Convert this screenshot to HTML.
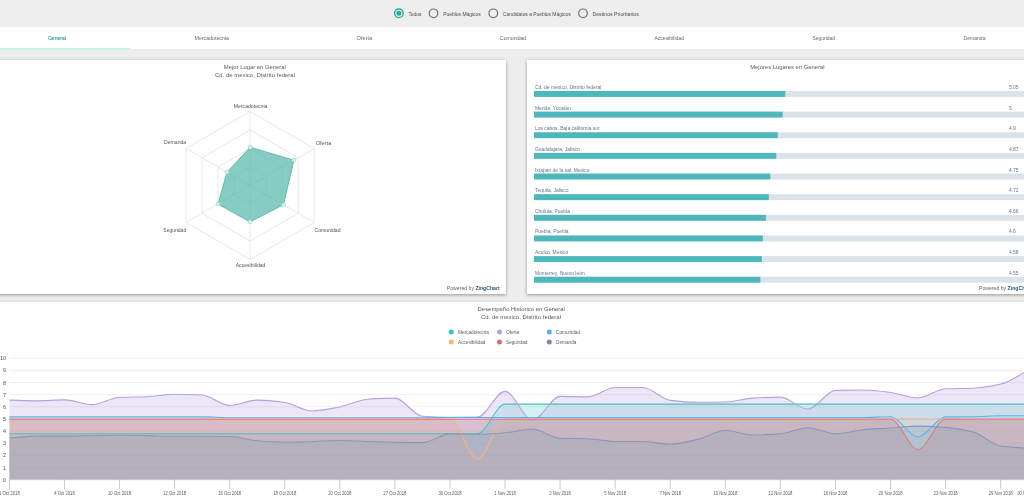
<!DOCTYPE html>
<html><head><meta charset="utf-8"><style>
html,body{margin:0;padding:0;}
body{width:1024px;height:499px;overflow:hidden;position:relative;background:#ededed;font-family:"Liberation Sans", sans-serif;}
.abs{position:absolute;}
#topbar{left:0;top:0;width:1024px;height:27px;background:#eeeeee;}
#tabs{left:0;top:27px;width:1024px;height:22px;background:#fff;box-shadow:0 -0.5px 1.5px rgba(0,0,0,0.06);}
#uline{left:0;top:48px;width:131px;height:2px;background:#c4f5e7;}
.card{background:#fff;box-shadow:0 0 3px rgba(0,0,0,0.18),0 1.5px 3px rgba(0,0,0,0.24);}
#c1{left:-20px;top:60px;width:526px;height:234px;}
#c2{left:527px;top:60px;width:530px;height:234px;}
#c3{left:-10px;top:302px;width:1050px;height:220px;box-shadow:0 -1px 2px rgba(0,0,0,0.05);}
svg{position:absolute;left:0;top:0;will-change:transform;}
text{font-family:"Liberation Sans", sans-serif;}
</style></head><body>
<div class="abs" id="topbar"></div>
<div class="abs" id="tabs"></div>
<div class="abs" id="uline"></div>
<div class="abs card" id="c1"></div>
<div class="abs card" id="c2"></div>
<div class="abs card" id="c3"></div>
<svg width="1024" height="499" viewBox="0 0 1024 499">
<circle cx="398.9" cy="13.3" r="4.3" fill="none" stroke="#2aa99b" stroke-width="1.4"/><circle cx="398.9" cy="13.3" r="2.5" fill="#2aa99b"/>
<text x="408.40" y="15.70" font-size="5.8" text-anchor="start" fill="#4a4a4a" textLength="13.00" lengthAdjust="spacingAndGlyphs">Todos</text>
<circle cx="433.5" cy="13.3" r="4.3" fill="none" stroke="#6f6f6f" stroke-width="1.2"/>
<text x="443.20" y="15.70" font-size="5.8" text-anchor="start" fill="#4a4a4a" textLength="37.60" lengthAdjust="spacingAndGlyphs">Pueblos Mágicos</text>
<circle cx="493.3" cy="13.3" r="4.3" fill="none" stroke="#6f6f6f" stroke-width="1.2"/>
<text x="503.00" y="15.70" font-size="5.8" text-anchor="start" fill="#4a4a4a" textLength="67.60" lengthAdjust="spacingAndGlyphs">Candidatos a Pueblos Mágicos</text>
<circle cx="583" cy="13.3" r="4.3" fill="none" stroke="#6f6f6f" stroke-width="1.2"/>
<text x="592.50" y="15.70" font-size="5.8" text-anchor="start" fill="#4a4a4a" textLength="46.30" lengthAdjust="spacingAndGlyphs">Destinos Prioritarios</text>
<text x="47.90" y="39.80" font-size="5.7" text-anchor="start" fill="#2f9f92" textLength="18.10" lengthAdjust="spacingAndGlyphs" stroke="#2f9f92" stroke-width="0.12">General</text>
<text x="194.60" y="39.80" font-size="5.7" text-anchor="start" fill="#666" textLength="34.40" lengthAdjust="spacingAndGlyphs">Mercadotecnia</text>
<text x="356.60" y="39.80" font-size="5.7" text-anchor="start" fill="#666" textLength="15.70" lengthAdjust="spacingAndGlyphs">Oferta</text>
<text x="500.00" y="39.80" font-size="5.7" text-anchor="start" fill="#666" textLength="26.20" lengthAdjust="spacingAndGlyphs">Comunidad</text>
<text x="654.40" y="39.80" font-size="5.7" text-anchor="start" fill="#666" textLength="29.60" lengthAdjust="spacingAndGlyphs">Accesibilidad</text>
<text x="812.50" y="39.80" font-size="5.7" text-anchor="start" fill="#666" textLength="22.50" lengthAdjust="spacingAndGlyphs">Seguridad</text>
<text x="963.60" y="39.80" font-size="5.7" text-anchor="start" fill="#666" textLength="21.90" lengthAdjust="spacingAndGlyphs">Demanda</text>
<text x="223.80" y="69.00" font-size="5.9" text-anchor="start" fill="#5a5a5a" textLength="62.10" lengthAdjust="spacingAndGlyphs">Mejor Lugar en General</text>
<text x="215.00" y="76.70" font-size="5.9" text-anchor="start" fill="#5a5a5a" textLength="80.00" lengthAdjust="spacingAndGlyphs">Cd. de mexico, Distrito federal</text>
<polygon points="250.10,167.00 266.12,176.25 266.12,194.75 250.10,204.00 234.08,194.75 234.08,176.25" fill="none" stroke="#e2e2e2" stroke-width="0.8"/>
<polygon points="250.10,148.50 282.14,167.00 282.14,204.00 250.10,222.50 218.06,204.00 218.06,167.00" fill="none" stroke="#e2e2e2" stroke-width="0.8"/>
<polygon points="250.10,130.00 298.16,157.75 298.16,213.25 250.10,241.00 202.04,213.25 202.04,157.75" fill="none" stroke="#e2e2e2" stroke-width="0.8"/>
<polygon points="250.10,111.50 314.19,148.50 314.19,222.50 250.10,259.50 186.01,222.50 186.01,148.50" fill="none" stroke="#e2e2e2" stroke-width="0.8"/>
<line x1="250.1" y1="185.5" x2="250.10" y2="111.50" stroke="#e2e2e2" stroke-width="0.8"/>
<line x1="250.1" y1="185.5" x2="314.19" y2="148.50" stroke="#e2e2e2" stroke-width="0.8"/>
<line x1="250.1" y1="185.5" x2="314.19" y2="222.50" stroke="#e2e2e2" stroke-width="0.8"/>
<line x1="250.1" y1="185.5" x2="250.10" y2="259.50" stroke="#e2e2e2" stroke-width="0.8"/>
<line x1="250.1" y1="185.5" x2="186.01" y2="222.50" stroke="#e2e2e2" stroke-width="0.8"/>
<line x1="250.1" y1="185.5" x2="186.01" y2="148.50" stroke="#e2e2e2" stroke-width="0.8"/>
<polygon points="250.10,147.24 293.93,160.19 283.42,204.74 250.10,221.76 218.06,204.00 227.03,172.18" fill="#52b6a8" fill-opacity="0.7" stroke="#5fbbae" stroke-width="1"/>
<circle cx="250.10" cy="147.24" r="2" fill="#d8f0ea" stroke="#8fd0c5" stroke-width="0.6"/>
<circle cx="293.93" cy="160.19" r="2" fill="#d8f0ea" stroke="#8fd0c5" stroke-width="0.6"/>
<circle cx="283.42" cy="204.74" r="2" fill="#d8f0ea" stroke="#8fd0c5" stroke-width="0.6"/>
<circle cx="250.10" cy="221.76" r="2" fill="#d8f0ea" stroke="#8fd0c5" stroke-width="0.6"/>
<circle cx="218.06" cy="204.00" r="2" fill="#d8f0ea" stroke="#8fd0c5" stroke-width="0.6"/>
<circle cx="227.03" cy="172.18" r="2" fill="#d8f0ea" stroke="#8fd0c5" stroke-width="0.6"/>
<text x="233.70" y="108.30" font-size="5.3" text-anchor="start" fill="#555" textLength="33.80" lengthAdjust="spacingAndGlyphs">Mercadotecnia</text>
<text x="315.70" y="145.20" font-size="5.3" text-anchor="start" fill="#555" textLength="15.60" lengthAdjust="spacingAndGlyphs">Oferta</text>
<text x="314.60" y="231.70" font-size="5.3" text-anchor="start" fill="#555" textLength="25.90" lengthAdjust="spacingAndGlyphs">Comunidad</text>
<text x="235.70" y="267.10" font-size="5.3" text-anchor="start" fill="#555" textLength="29.70" lengthAdjust="spacingAndGlyphs">Accesibilidad</text>
<text x="163.30" y="231.70" font-size="5.3" text-anchor="start" fill="#555" textLength="22.90" lengthAdjust="spacingAndGlyphs">Seguridad</text>
<text x="164.00" y="144.10" font-size="5.3" text-anchor="start" fill="#555" textLength="22.20" lengthAdjust="spacingAndGlyphs">Demanda</text>
<text x="446.8" y="289.7" font-size="5.4" fill="#666" textLength="52.9" lengthAdjust="spacingAndGlyphs">Powered by <tspan font-weight="bold" fill="#2a5868">ZingChart</tspan></text>
<text x="750.20" y="69.10" font-size="5.9" text-anchor="start" fill="#5a5a5a" textLength="74.50" lengthAdjust="spacingAndGlyphs">Mejores Lugares en General</text>
<rect x="534" y="91.00" width="500" height="5.9" fill="#dae3ea"/>
<rect x="534" y="91.00" width="251.24" height="5.9" fill="#4db8bc"/>
<text x="535.00" y="89.00" font-size="5.5" text-anchor="start" fill="#66738c" textLength="66.30" lengthAdjust="spacingAndGlyphs">Cd. de mexico, Distrito federal</text>
<text x="1009.00" y="89.00" font-size="5.5" text-anchor="start" fill="#66738c" textLength="9.63" lengthAdjust="spacingAndGlyphs">5.05</text>
<rect x="534" y="111.64" width="500" height="5.9" fill="#dae3ea"/>
<rect x="534" y="111.64" width="248.75" height="5.9" fill="#4db8bc"/>
<text x="535.00" y="109.64" font-size="5.5" text-anchor="start" fill="#66738c" textLength="35.68" lengthAdjust="spacingAndGlyphs">Merida, Yucatán</text>
<text x="1009.00" y="109.64" font-size="5.5" text-anchor="start" fill="#66738c" textLength="2.75" lengthAdjust="spacingAndGlyphs">5</text>
<rect x="534" y="132.28" width="500" height="5.9" fill="#dae3ea"/>
<rect x="534" y="132.28" width="243.78" height="5.9" fill="#4db8bc"/>
<text x="535.00" y="130.28" font-size="5.5" text-anchor="start" fill="#66738c" textLength="64.66" lengthAdjust="spacingAndGlyphs">Los cabos, Baja california sur</text>
<text x="1009.00" y="130.28" font-size="5.5" text-anchor="start" fill="#66738c" textLength="6.88" lengthAdjust="spacingAndGlyphs">4.9</text>
<rect x="534" y="152.92" width="500" height="5.9" fill="#dae3ea"/>
<rect x="534" y="152.92" width="242.28" height="5.9" fill="#4db8bc"/>
<text x="535.00" y="150.92" font-size="5.5" text-anchor="start" fill="#66738c" textLength="44.85" lengthAdjust="spacingAndGlyphs">Guadalajara, Jalisco</text>
<text x="1009.00" y="150.92" font-size="5.5" text-anchor="start" fill="#66738c" textLength="9.63" lengthAdjust="spacingAndGlyphs">4.87</text>
<rect x="534" y="173.56" width="500" height="5.9" fill="#dae3ea"/>
<rect x="534" y="173.56" width="236.31" height="5.9" fill="#4db8bc"/>
<text x="535.00" y="171.56" font-size="5.5" text-anchor="start" fill="#66738c" textLength="54.48" lengthAdjust="spacingAndGlyphs">Ixtapan de la sal, Mexico</text>
<text x="1009.00" y="171.56" font-size="5.5" text-anchor="start" fill="#66738c" textLength="9.63" lengthAdjust="spacingAndGlyphs">4.75</text>
<rect x="534" y="194.20" width="500" height="5.9" fill="#dae3ea"/>
<rect x="534" y="194.20" width="234.82" height="5.9" fill="#4db8bc"/>
<text x="535.00" y="192.20" font-size="5.5" text-anchor="start" fill="#66738c" textLength="33.57" lengthAdjust="spacingAndGlyphs">Tequila, Jalisco</text>
<text x="1009.00" y="192.20" font-size="5.5" text-anchor="start" fill="#66738c" textLength="9.63" lengthAdjust="spacingAndGlyphs">4.72</text>
<rect x="534" y="214.84" width="500" height="5.9" fill="#dae3ea"/>
<rect x="534" y="214.84" width="231.84" height="5.9" fill="#4db8bc"/>
<text x="535.00" y="212.84" font-size="5.5" text-anchor="start" fill="#66738c" textLength="34.95" lengthAdjust="spacingAndGlyphs">Cholula, Puebla</text>
<text x="1009.00" y="212.84" font-size="5.5" text-anchor="start" fill="#66738c" textLength="9.63" lengthAdjust="spacingAndGlyphs">4.66</text>
<rect x="534" y="235.48" width="500" height="5.9" fill="#dae3ea"/>
<rect x="534" y="235.48" width="228.85" height="5.9" fill="#4db8bc"/>
<text x="535.00" y="233.48" font-size="5.5" text-anchor="start" fill="#66738c" textLength="33.57" lengthAdjust="spacingAndGlyphs">Puebla, Puebla</text>
<text x="1009.00" y="233.48" font-size="5.5" text-anchor="start" fill="#66738c" textLength="6.88" lengthAdjust="spacingAndGlyphs">4.6</text>
<rect x="534" y="256.12" width="500" height="5.9" fill="#dae3ea"/>
<rect x="534" y="256.12" width="227.85" height="5.9" fill="#4db8bc"/>
<text x="535.00" y="254.12" font-size="5.5" text-anchor="start" fill="#66738c" textLength="33.29" lengthAdjust="spacingAndGlyphs">Aculco, Mexico</text>
<text x="1009.00" y="254.12" font-size="5.5" text-anchor="start" fill="#66738c" textLength="9.63" lengthAdjust="spacingAndGlyphs">4.58</text>
<rect x="534" y="276.76" width="500" height="5.9" fill="#dae3ea"/>
<rect x="534" y="276.76" width="226.36" height="5.9" fill="#4db8bc"/>
<text x="535.00" y="274.76" font-size="5.5" text-anchor="start" fill="#66738c" textLength="49.70" lengthAdjust="spacingAndGlyphs">Monterrey, Nuevo león</text>
<text x="1009.00" y="274.76" font-size="5.5" text-anchor="start" fill="#66738c" textLength="9.63" lengthAdjust="spacingAndGlyphs">4.55</text>
<text x="979" y="289.7" font-size="5.4" fill="#666" textLength="52.9" lengthAdjust="spacingAndGlyphs">Powered by <tspan font-weight="bold" fill="#2a5868">ZingChart</tspan></text>
<text x="477.60" y="311.00" font-size="5.9" text-anchor="start" fill="#5a5a5a" textLength="87.30" lengthAdjust="spacingAndGlyphs">Desempeño Historico en General</text>
<text x="521.00" y="318.60" font-size="5.9" text-anchor="middle" fill="#5a5a5a" textLength="80.00" lengthAdjust="spacingAndGlyphs">Cd. de mexico, Distrito federal</text>
<circle cx="451.3" cy="332.1" r="2.5" fill="#35c4c2"/>
<text x="458.00" y="333.90" font-size="5.0" text-anchor="start" fill="#606060" textLength="30.83" lengthAdjust="spacingAndGlyphs">Mercadotecnia</text>
<circle cx="499.5" cy="332.1" r="2.5" fill="#b7a2e0"/>
<text x="506.00" y="333.90" font-size="5.0" text-anchor="start" fill="#606060" textLength="13.06" lengthAdjust="spacingAndGlyphs">Oferta</text>
<circle cx="549.3" cy="332.1" r="2.5" fill="#56acee"/>
<text x="556.00" y="333.90" font-size="5.0" text-anchor="start" fill="#606060" textLength="24.04" lengthAdjust="spacingAndGlyphs">Comunidad</text>
<circle cx="451.3" cy="342.0" r="2.5" fill="#fdb27e"/>
<text x="458.00" y="343.80" font-size="5.0" text-anchor="start" fill="#606060" textLength="27.43" lengthAdjust="spacingAndGlyphs">Accesibilidad</text>
<circle cx="499.5" cy="342.0" r="2.5" fill="#d86c76"/>
<text x="506.00" y="343.80" font-size="5.0" text-anchor="start" fill="#606060" textLength="21.43" lengthAdjust="spacingAndGlyphs">Seguridad</text>
<circle cx="549.3" cy="342.0" r="2.5" fill="#7e89ae"/>
<text x="556.00" y="343.80" font-size="5.0" text-anchor="start" fill="#606060" textLength="20.38" lengthAdjust="spacingAndGlyphs">Demanda</text>
<line x1="9.4" y1="467.55" x2="1024" y2="467.55" stroke="#ededed" stroke-width="0.9"/>
<line x1="9.4" y1="455.40" x2="1024" y2="455.40" stroke="#ededed" stroke-width="0.9"/>
<line x1="9.4" y1="443.25" x2="1024" y2="443.25" stroke="#ededed" stroke-width="0.9"/>
<line x1="9.4" y1="431.10" x2="1024" y2="431.10" stroke="#ededed" stroke-width="0.9"/>
<line x1="9.4" y1="418.95" x2="1024" y2="418.95" stroke="#ededed" stroke-width="0.9"/>
<line x1="9.4" y1="406.80" x2="1024" y2="406.80" stroke="#ededed" stroke-width="0.9"/>
<line x1="9.4" y1="394.65" x2="1024" y2="394.65" stroke="#ededed" stroke-width="0.9"/>
<line x1="9.4" y1="382.50" x2="1024" y2="382.50" stroke="#ededed" stroke-width="0.9"/>
<line x1="9.4" y1="370.35" x2="1024" y2="370.35" stroke="#ededed" stroke-width="0.9"/>
<line x1="9.4" y1="358.20" x2="1024" y2="358.20" stroke="#ededed" stroke-width="0.9"/>
<path d="M9.40,433.77 C18.58,433.77 27.76,433.77 36.94,433.77 C46.11,433.77 55.29,433.77 64.47,433.77 C73.65,433.77 82.83,433.77 92.01,433.77 C101.18,433.77 110.36,433.77 119.54,433.77 C128.72,433.77 137.90,433.77 147.08,433.77 C156.25,433.77 165.43,433.77 174.61,433.77 C183.79,433.77 192.97,433.77 202.15,433.77 C211.32,433.77 220.50,433.77 229.68,433.77 C238.86,433.77 248.04,433.77 257.21,433.77 C266.39,433.77 275.57,433.77 284.75,433.77 C293.93,433.77 303.11,433.77 312.28,433.77 C321.46,433.77 330.64,433.77 339.82,433.77 C349.00,433.77 358.18,433.77 367.35,433.77 C376.53,433.77 385.71,433.77 394.89,433.77 C404.07,433.77 413.25,433.77 422.42,433.77 C431.60,433.77 440.78,433.77 449.96,433.77 C459.14,433.77 468.32,433.77 477.50,433.77 C486.67,433.77 495.85,404.13 505.03,404.13 C514.21,404.13 523.39,404.13 532.56,404.13 C541.74,404.13 550.92,404.13 560.10,404.13 C569.28,404.13 578.46,404.13 587.63,404.13 C596.81,404.13 605.99,404.13 615.17,404.13 C624.35,404.13 633.53,404.13 642.70,404.13 C651.88,404.13 661.06,404.13 670.24,404.13 C679.42,404.13 688.60,404.13 697.77,404.13 C706.95,404.13 716.13,404.13 725.31,404.13 C734.49,404.13 743.67,404.13 752.85,404.13 C762.02,404.13 771.20,404.13 780.38,404.13 C789.56,404.13 798.74,404.13 807.91,404.13 C817.09,404.13 826.27,404.13 835.45,404.13 C844.63,404.13 853.81,404.13 862.99,404.13 C872.16,404.13 881.34,404.13 890.52,404.13 C899.70,404.13 908.88,404.13 918.05,404.13 C927.23,404.13 936.41,404.13 945.59,404.13 C954.77,404.13 963.95,404.13 973.12,404.13 C982.30,404.13 991.48,404.13 1000.66,404.13 C1009.84,404.13 1019.02,404.13 1028.19,404.13 L1028.19,479.70 L9.40,479.70 Z" fill="#2fc4be" fill-opacity="0.21" stroke="none"/>
<path d="M9.40,400.12 C18.58,400.36 27.76,400.85 36.94,400.85 C46.11,400.85 55.29,399.87 64.47,399.87 C73.65,399.87 82.83,404.61 92.01,404.61 C101.18,404.61 110.36,397.70 119.54,397.32 C128.72,396.95 137.90,397.04 147.08,396.72 C156.25,396.39 165.43,394.29 174.61,394.29 C183.79,394.29 192.97,394.56 202.15,395.01 C211.32,395.47 220.50,405.46 229.68,405.46 C238.86,405.46 248.04,400.12 257.21,400.12 C266.39,400.12 275.57,401.29 284.75,402.55 C293.93,403.80 303.11,410.93 312.28,410.93 C321.46,410.93 330.64,408.68 339.82,406.92 C349.00,405.17 358.18,399.90 367.35,399.27 C376.53,398.63 385.71,398.17 394.89,398.17 C404.07,398.17 413.25,415.59 422.42,416.28 C431.60,416.96 440.78,417.37 449.96,417.37 C459.14,417.37 468.32,417.29 477.50,417.13 C486.67,416.97 495.85,391.37 505.03,391.37 C514.21,391.37 523.39,420.16 532.56,420.16 C541.74,420.16 550.92,396.35 560.10,396.35 C569.28,396.35 578.46,396.84 587.63,396.84 C596.81,396.84 605.99,387.48 615.17,387.48 C624.35,387.48 633.53,387.48 642.70,387.48 C651.88,387.48 661.06,399.23 670.24,400.36 C679.42,401.49 688.60,402.30 697.77,402.30 C706.95,402.30 716.13,402.16 725.31,401.94 C734.49,401.72 743.67,398.74 752.85,398.17 C762.02,397.61 771.20,397.08 780.38,397.08 C789.56,397.08 798.74,409.11 807.91,409.11 C817.09,409.11 826.27,390.64 835.45,390.40 C844.63,390.16 853.81,390.03 862.99,390.03 C872.16,390.03 881.34,391.34 890.52,392.46 C899.70,393.58 908.88,397.93 918.05,397.93 C927.23,397.93 936.41,389.20 945.59,388.82 C954.77,388.44 963.95,388.56 973.12,388.21 C982.30,387.86 991.48,386.20 1000.66,384.08 C1009.84,381.96 1019.02,374.93 1028.19,370.35 L1028.19,479.70 L9.40,479.70 Z" fill="#b59ee0" fill-opacity="0.25" stroke="none"/>
<path d="M9.40,416.88 C18.58,416.88 27.76,416.88 36.94,416.88 C46.11,416.88 55.29,416.88 64.47,416.88 C73.65,416.88 82.83,416.88 92.01,416.88 C101.18,416.88 110.36,416.88 119.54,416.88 C128.72,416.88 137.90,416.88 147.08,416.88 C156.25,416.88 165.43,416.88 174.61,416.88 C183.79,416.88 192.97,416.88 202.15,416.88 C211.32,416.88 220.50,417.74 229.68,417.74 C238.86,417.74 248.04,417.74 257.21,417.74 C266.39,417.74 275.57,417.74 284.75,417.74 C293.93,417.74 303.11,417.74 312.28,417.74 C321.46,417.74 330.64,417.74 339.82,417.74 C349.00,417.74 358.18,417.74 367.35,417.74 C376.53,417.74 385.71,417.74 394.89,417.74 C404.07,417.74 413.25,417.74 422.42,417.74 C431.60,417.74 440.78,417.49 449.96,417.49 C459.14,417.49 468.32,417.49 477.50,417.49 C486.67,417.49 495.85,417.49 505.03,417.49 C514.21,417.49 523.39,417.49 532.56,417.49 C541.74,417.49 550.92,417.49 560.10,417.49 C569.28,417.49 578.46,417.49 587.63,417.49 C596.81,417.49 605.99,417.49 615.17,417.49 C624.35,417.49 633.53,417.49 642.70,417.49 C651.88,417.49 661.06,417.49 670.24,417.49 C679.42,417.49 688.60,417.49 697.77,417.49 C706.95,417.49 716.13,417.49 725.31,417.49 C734.49,417.49 743.67,417.49 752.85,417.49 C762.02,417.49 771.20,417.49 780.38,417.49 C789.56,417.49 798.74,417.49 807.91,417.49 C817.09,417.49 826.27,417.49 835.45,417.49 C844.63,417.49 853.81,417.49 862.99,417.49 C872.16,417.49 881.34,416.76 890.52,416.76 C899.70,416.76 908.88,436.93 918.05,436.93 C927.23,436.93 936.41,416.97 945.59,416.88 C954.77,416.80 963.95,416.83 973.12,416.76 C982.30,416.69 991.48,415.79 1000.66,415.79 C1009.84,415.79 1019.02,415.79 1028.19,415.79 L1028.19,479.70 L9.40,479.70 Z" fill="#5aaee8" fill-opacity="0.14" stroke="none"/>
<path d="M9.40,418.95 C18.58,418.95 27.76,418.95 36.94,418.95 C46.11,418.95 55.29,418.95 64.47,418.95 C73.65,418.95 82.83,418.95 92.01,418.95 C101.18,418.95 110.36,418.95 119.54,418.95 C128.72,418.95 137.90,418.95 147.08,418.95 C156.25,418.95 165.43,418.95 174.61,418.95 C183.79,418.95 192.97,418.95 202.15,418.95 C211.32,418.95 220.50,418.95 229.68,418.95 C238.86,418.95 248.04,418.95 257.21,418.95 C266.39,418.95 275.57,418.95 284.75,418.95 C293.93,418.95 303.11,418.95 312.28,418.95 C321.46,418.95 330.64,418.95 339.82,418.95 C349.00,418.95 358.18,418.95 367.35,418.95 C376.53,418.95 385.71,418.95 394.89,418.95 C404.07,418.95 413.25,418.95 422.42,418.95 C431.60,418.95 440.78,418.95 449.96,418.95 C459.14,418.95 468.32,459.17 477.50,459.17 C486.67,459.17 495.85,418.95 505.03,418.95 C514.21,418.95 523.39,418.95 532.56,418.95 C541.74,418.95 550.92,418.95 560.10,418.95 C569.28,418.95 578.46,418.95 587.63,418.95 C596.81,418.95 605.99,418.95 615.17,418.95 C624.35,418.95 633.53,418.95 642.70,418.95 C651.88,418.95 661.06,418.95 670.24,418.95 C679.42,418.95 688.60,418.95 697.77,418.95 C706.95,418.95 716.13,418.95 725.31,418.95 C734.49,418.95 743.67,418.95 752.85,418.95 C762.02,418.95 771.20,418.95 780.38,418.95 C789.56,418.95 798.74,418.95 807.91,418.95 C817.09,418.95 826.27,418.95 835.45,418.95 C844.63,418.95 853.81,418.95 862.99,418.95 C872.16,418.95 881.34,418.95 890.52,418.95 C899.70,418.95 908.88,418.95 918.05,418.95 C927.23,418.95 936.41,418.95 945.59,418.95 C954.77,418.95 963.95,418.95 973.12,418.95 C982.30,418.95 991.48,418.95 1000.66,418.95 C1009.84,418.95 1019.02,418.95 1028.19,418.95 L1028.19,479.70 L9.40,479.70 Z" fill="#f7ab72" fill-opacity="0.13" stroke="none"/>
<path d="M9.40,419.19 C18.58,419.19 27.76,419.19 36.94,419.19 C46.11,419.19 55.29,419.19 64.47,419.19 C73.65,419.19 82.83,419.19 92.01,419.19 C101.18,419.19 110.36,419.19 119.54,419.19 C128.72,419.19 137.90,419.19 147.08,419.19 C156.25,419.19 165.43,419.19 174.61,419.19 C183.79,419.19 192.97,419.19 202.15,419.19 C211.32,419.19 220.50,419.19 229.68,419.19 C238.86,419.19 248.04,419.19 257.21,419.19 C266.39,419.19 275.57,419.19 284.75,419.19 C293.93,419.19 303.11,419.19 312.28,419.19 C321.46,419.19 330.64,419.19 339.82,419.19 C349.00,419.19 358.18,419.19 367.35,419.19 C376.53,419.19 385.71,419.19 394.89,419.19 C404.07,419.19 413.25,419.19 422.42,419.19 C431.60,419.19 440.78,419.19 449.96,419.19 C459.14,419.19 468.32,419.19 477.50,419.19 C486.67,419.19 495.85,419.19 505.03,419.19 C514.21,419.19 523.39,419.19 532.56,419.19 C541.74,419.19 550.92,419.19 560.10,419.19 C569.28,419.19 578.46,419.19 587.63,419.19 C596.81,419.19 605.99,419.19 615.17,419.19 C624.35,419.19 633.53,419.19 642.70,419.19 C651.88,419.19 661.06,419.19 670.24,419.19 C679.42,419.19 688.60,419.19 697.77,419.19 C706.95,419.19 716.13,419.19 725.31,419.19 C734.49,419.19 743.67,419.19 752.85,419.19 C762.02,419.19 771.20,419.19 780.38,419.19 C789.56,419.19 798.74,419.19 807.91,419.19 C817.09,419.19 826.27,419.19 835.45,419.19 C844.63,419.19 853.81,419.19 862.99,419.19 C872.16,419.19 881.34,419.19 890.52,419.19 C899.70,419.19 908.88,449.45 918.05,449.45 C927.23,449.45 936.41,419.19 945.59,419.19 C954.77,419.19 963.95,419.19 973.12,419.19 C982.30,419.19 991.48,419.19 1000.66,419.19 C1009.84,419.19 1019.02,419.19 1028.19,419.19 L1028.19,479.70 L9.40,479.70 Z" fill="#d9636b" fill-opacity="0.25" stroke="none"/>
<path d="M9.40,438.03 C18.58,437.38 27.76,436.08 36.94,436.08 C46.11,436.08 55.29,436.08 64.47,436.08 C73.65,436.08 82.83,435.86 92.01,435.72 C101.18,435.58 110.36,435.23 119.54,435.23 C128.72,435.23 137.90,435.43 147.08,435.60 C156.25,435.76 165.43,436.32 174.61,436.32 C183.79,436.32 192.97,436.32 202.15,436.32 C211.32,436.32 220.50,436.37 229.68,436.45 C238.86,436.52 248.04,440.09 257.21,440.82 C266.39,441.55 275.57,442.28 284.75,442.28 C293.93,442.28 303.11,441.84 312.28,441.55 C321.46,441.26 330.64,440.46 339.82,440.46 C349.00,440.46 358.18,441.26 367.35,441.55 C376.53,441.84 385.71,442.12 394.89,442.28 C404.07,442.44 413.25,442.64 422.42,442.64 C431.60,442.64 440.78,433.89 449.96,433.89 C459.14,433.89 468.32,434.26 477.50,434.26 C486.67,434.26 495.85,433.50 505.03,432.80 C514.21,432.10 523.39,429.03 532.56,429.03 C541.74,429.03 550.92,437.96 560.10,438.27 C569.28,438.58 578.46,438.48 587.63,438.75 C596.81,439.03 605.99,441.55 615.17,441.55 C624.35,441.55 633.53,441.55 642.70,441.55 C651.88,441.55 661.06,444.22 670.24,444.22 C679.42,444.22 688.60,441.46 697.77,439.36 C706.95,437.27 716.13,430.49 725.31,430.49 C734.49,430.49 743.67,434.99 752.85,434.99 C762.02,434.99 771.20,434.51 780.38,433.89 C789.56,433.27 798.74,427.70 807.91,427.70 C817.09,427.70 826.27,433.89 835.45,433.89 C844.63,433.89 853.81,430.57 862.99,429.76 C872.16,428.96 881.34,428.67 890.52,428.06 C899.70,427.46 908.88,426.12 918.05,426.12 C927.23,426.12 936.41,426.69 945.59,427.33 C954.77,427.98 963.95,429.71 973.12,432.07 C982.30,434.43 991.48,444.78 1000.66,446.04 C1009.84,447.31 1019.02,447.50 1028.19,448.23 L1028.19,479.70 L9.40,479.70 Z" fill="#8ca5b6" fill-opacity="0.33" stroke="none"/>
<path d="M9.40,433.77 C18.58,433.77 27.76,433.77 36.94,433.77 C46.11,433.77 55.29,433.77 64.47,433.77 C73.65,433.77 82.83,433.77 92.01,433.77 C101.18,433.77 110.36,433.77 119.54,433.77 C128.72,433.77 137.90,433.77 147.08,433.77 C156.25,433.77 165.43,433.77 174.61,433.77 C183.79,433.77 192.97,433.77 202.15,433.77 C211.32,433.77 220.50,433.77 229.68,433.77 C238.86,433.77 248.04,433.77 257.21,433.77 C266.39,433.77 275.57,433.77 284.75,433.77 C293.93,433.77 303.11,433.77 312.28,433.77 C321.46,433.77 330.64,433.77 339.82,433.77 C349.00,433.77 358.18,433.77 367.35,433.77 C376.53,433.77 385.71,433.77 394.89,433.77 C404.07,433.77 413.25,433.77 422.42,433.77 C431.60,433.77 440.78,433.77 449.96,433.77 C459.14,433.77 468.32,433.77 477.50,433.77 C486.67,433.77 495.85,404.13 505.03,404.13 C514.21,404.13 523.39,404.13 532.56,404.13 C541.74,404.13 550.92,404.13 560.10,404.13 C569.28,404.13 578.46,404.13 587.63,404.13 C596.81,404.13 605.99,404.13 615.17,404.13 C624.35,404.13 633.53,404.13 642.70,404.13 C651.88,404.13 661.06,404.13 670.24,404.13 C679.42,404.13 688.60,404.13 697.77,404.13 C706.95,404.13 716.13,404.13 725.31,404.13 C734.49,404.13 743.67,404.13 752.85,404.13 C762.02,404.13 771.20,404.13 780.38,404.13 C789.56,404.13 798.74,404.13 807.91,404.13 C817.09,404.13 826.27,404.13 835.45,404.13 C844.63,404.13 853.81,404.13 862.99,404.13 C872.16,404.13 881.34,404.13 890.52,404.13 C899.70,404.13 908.88,404.13 918.05,404.13 C927.23,404.13 936.41,404.13 945.59,404.13 C954.77,404.13 963.95,404.13 973.12,404.13 C982.30,404.13 991.48,404.13 1000.66,404.13 C1009.84,404.13 1019.02,404.13 1028.19,404.13" fill="none" stroke="#45c2bc" stroke-width="1.1"/>
<path d="M9.40,400.12 C18.58,400.36 27.76,400.85 36.94,400.85 C46.11,400.85 55.29,399.87 64.47,399.87 C73.65,399.87 82.83,404.61 92.01,404.61 C101.18,404.61 110.36,397.70 119.54,397.32 C128.72,396.95 137.90,397.04 147.08,396.72 C156.25,396.39 165.43,394.29 174.61,394.29 C183.79,394.29 192.97,394.56 202.15,395.01 C211.32,395.47 220.50,405.46 229.68,405.46 C238.86,405.46 248.04,400.12 257.21,400.12 C266.39,400.12 275.57,401.29 284.75,402.55 C293.93,403.80 303.11,410.93 312.28,410.93 C321.46,410.93 330.64,408.68 339.82,406.92 C349.00,405.17 358.18,399.90 367.35,399.27 C376.53,398.63 385.71,398.17 394.89,398.17 C404.07,398.17 413.25,415.59 422.42,416.28 C431.60,416.96 440.78,417.37 449.96,417.37 C459.14,417.37 468.32,417.29 477.50,417.13 C486.67,416.97 495.85,391.37 505.03,391.37 C514.21,391.37 523.39,420.16 532.56,420.16 C541.74,420.16 550.92,396.35 560.10,396.35 C569.28,396.35 578.46,396.84 587.63,396.84 C596.81,396.84 605.99,387.48 615.17,387.48 C624.35,387.48 633.53,387.48 642.70,387.48 C651.88,387.48 661.06,399.23 670.24,400.36 C679.42,401.49 688.60,402.30 697.77,402.30 C706.95,402.30 716.13,402.16 725.31,401.94 C734.49,401.72 743.67,398.74 752.85,398.17 C762.02,397.61 771.20,397.08 780.38,397.08 C789.56,397.08 798.74,409.11 807.91,409.11 C817.09,409.11 826.27,390.64 835.45,390.40 C844.63,390.16 853.81,390.03 862.99,390.03 C872.16,390.03 881.34,391.34 890.52,392.46 C899.70,393.58 908.88,397.93 918.05,397.93 C927.23,397.93 936.41,389.20 945.59,388.82 C954.77,388.44 963.95,388.56 973.12,388.21 C982.30,387.86 991.48,386.20 1000.66,384.08 C1009.84,381.96 1019.02,374.93 1028.19,370.35" fill="none" stroke="#b7a0e2" stroke-width="1.1"/>
<path d="M9.40,416.88 C18.58,416.88 27.76,416.88 36.94,416.88 C46.11,416.88 55.29,416.88 64.47,416.88 C73.65,416.88 82.83,416.88 92.01,416.88 C101.18,416.88 110.36,416.88 119.54,416.88 C128.72,416.88 137.90,416.88 147.08,416.88 C156.25,416.88 165.43,416.88 174.61,416.88 C183.79,416.88 192.97,416.88 202.15,416.88 C211.32,416.88 220.50,417.74 229.68,417.74 C238.86,417.74 248.04,417.74 257.21,417.74 C266.39,417.74 275.57,417.74 284.75,417.74 C293.93,417.74 303.11,417.74 312.28,417.74 C321.46,417.74 330.64,417.74 339.82,417.74 C349.00,417.74 358.18,417.74 367.35,417.74 C376.53,417.74 385.71,417.74 394.89,417.74 C404.07,417.74 413.25,417.74 422.42,417.74 C431.60,417.74 440.78,417.49 449.96,417.49 C459.14,417.49 468.32,417.49 477.50,417.49 C486.67,417.49 495.85,417.49 505.03,417.49 C514.21,417.49 523.39,417.49 532.56,417.49 C541.74,417.49 550.92,417.49 560.10,417.49 C569.28,417.49 578.46,417.49 587.63,417.49 C596.81,417.49 605.99,417.49 615.17,417.49 C624.35,417.49 633.53,417.49 642.70,417.49 C651.88,417.49 661.06,417.49 670.24,417.49 C679.42,417.49 688.60,417.49 697.77,417.49 C706.95,417.49 716.13,417.49 725.31,417.49 C734.49,417.49 743.67,417.49 752.85,417.49 C762.02,417.49 771.20,417.49 780.38,417.49 C789.56,417.49 798.74,417.49 807.91,417.49 C817.09,417.49 826.27,417.49 835.45,417.49 C844.63,417.49 853.81,417.49 862.99,417.49 C872.16,417.49 881.34,416.76 890.52,416.76 C899.70,416.76 908.88,436.93 918.05,436.93 C927.23,436.93 936.41,416.97 945.59,416.88 C954.77,416.80 963.95,416.83 973.12,416.76 C982.30,416.69 991.48,415.79 1000.66,415.79 C1009.84,415.79 1019.02,415.79 1028.19,415.79" fill="none" stroke="#62b1ea" stroke-width="1.1"/>
<path d="M9.40,418.95 C18.58,418.95 27.76,418.95 36.94,418.95 C46.11,418.95 55.29,418.95 64.47,418.95 C73.65,418.95 82.83,418.95 92.01,418.95 C101.18,418.95 110.36,418.95 119.54,418.95 C128.72,418.95 137.90,418.95 147.08,418.95 C156.25,418.95 165.43,418.95 174.61,418.95 C183.79,418.95 192.97,418.95 202.15,418.95 C211.32,418.95 220.50,418.95 229.68,418.95 C238.86,418.95 248.04,418.95 257.21,418.95 C266.39,418.95 275.57,418.95 284.75,418.95 C293.93,418.95 303.11,418.95 312.28,418.95 C321.46,418.95 330.64,418.95 339.82,418.95 C349.00,418.95 358.18,418.95 367.35,418.95 C376.53,418.95 385.71,418.95 394.89,418.95 C404.07,418.95 413.25,418.95 422.42,418.95 C431.60,418.95 440.78,418.95 449.96,418.95 C459.14,418.95 468.32,459.17 477.50,459.17 C486.67,459.17 495.85,418.95 505.03,418.95 C514.21,418.95 523.39,418.95 532.56,418.95 C541.74,418.95 550.92,418.95 560.10,418.95 C569.28,418.95 578.46,418.95 587.63,418.95 C596.81,418.95 605.99,418.95 615.17,418.95 C624.35,418.95 633.53,418.95 642.70,418.95 C651.88,418.95 661.06,418.95 670.24,418.95 C679.42,418.95 688.60,418.95 697.77,418.95 C706.95,418.95 716.13,418.95 725.31,418.95 C734.49,418.95 743.67,418.95 752.85,418.95 C762.02,418.95 771.20,418.95 780.38,418.95 C789.56,418.95 798.74,418.95 807.91,418.95 C817.09,418.95 826.27,418.95 835.45,418.95 C844.63,418.95 853.81,418.95 862.99,418.95 C872.16,418.95 881.34,418.95 890.52,418.95 C899.70,418.95 908.88,418.95 918.05,418.95 C927.23,418.95 936.41,418.95 945.59,418.95 C954.77,418.95 963.95,418.95 973.12,418.95 C982.30,418.95 991.48,418.95 1000.66,418.95 C1009.84,418.95 1019.02,418.95 1028.19,418.95" fill="none" stroke="#f6b184" stroke-width="1.1"/>
<path d="M9.40,419.19 C18.58,419.19 27.76,419.19 36.94,419.19 C46.11,419.19 55.29,419.19 64.47,419.19 C73.65,419.19 82.83,419.19 92.01,419.19 C101.18,419.19 110.36,419.19 119.54,419.19 C128.72,419.19 137.90,419.19 147.08,419.19 C156.25,419.19 165.43,419.19 174.61,419.19 C183.79,419.19 192.97,419.19 202.15,419.19 C211.32,419.19 220.50,419.19 229.68,419.19 C238.86,419.19 248.04,419.19 257.21,419.19 C266.39,419.19 275.57,419.19 284.75,419.19 C293.93,419.19 303.11,419.19 312.28,419.19 C321.46,419.19 330.64,419.19 339.82,419.19 C349.00,419.19 358.18,419.19 367.35,419.19 C376.53,419.19 385.71,419.19 394.89,419.19 C404.07,419.19 413.25,419.19 422.42,419.19 C431.60,419.19 440.78,419.19 449.96,419.19 C459.14,419.19 468.32,419.19 477.50,419.19 C486.67,419.19 495.85,419.19 505.03,419.19 C514.21,419.19 523.39,419.19 532.56,419.19 C541.74,419.19 550.92,419.19 560.10,419.19 C569.28,419.19 578.46,419.19 587.63,419.19 C596.81,419.19 605.99,419.19 615.17,419.19 C624.35,419.19 633.53,419.19 642.70,419.19 C651.88,419.19 661.06,419.19 670.24,419.19 C679.42,419.19 688.60,419.19 697.77,419.19 C706.95,419.19 716.13,419.19 725.31,419.19 C734.49,419.19 743.67,419.19 752.85,419.19 C762.02,419.19 771.20,419.19 780.38,419.19 C789.56,419.19 798.74,419.19 807.91,419.19 C817.09,419.19 826.27,419.19 835.45,419.19 C844.63,419.19 853.81,419.19 862.99,419.19 C872.16,419.19 881.34,419.19 890.52,419.19 C899.70,419.19 908.88,449.45 918.05,449.45 C927.23,449.45 936.41,419.19 945.59,419.19 C954.77,419.19 963.95,419.19 973.12,419.19 C982.30,419.19 991.48,419.19 1000.66,419.19 C1009.84,419.19 1019.02,419.19 1028.19,419.19" fill="none" stroke="#de7b80" stroke-width="1.1"/>
<path d="M9.40,438.03 C18.58,437.38 27.76,436.08 36.94,436.08 C46.11,436.08 55.29,436.08 64.47,436.08 C73.65,436.08 82.83,435.86 92.01,435.72 C101.18,435.58 110.36,435.23 119.54,435.23 C128.72,435.23 137.90,435.43 147.08,435.60 C156.25,435.76 165.43,436.32 174.61,436.32 C183.79,436.32 192.97,436.32 202.15,436.32 C211.32,436.32 220.50,436.37 229.68,436.45 C238.86,436.52 248.04,440.09 257.21,440.82 C266.39,441.55 275.57,442.28 284.75,442.28 C293.93,442.28 303.11,441.84 312.28,441.55 C321.46,441.26 330.64,440.46 339.82,440.46 C349.00,440.46 358.18,441.26 367.35,441.55 C376.53,441.84 385.71,442.12 394.89,442.28 C404.07,442.44 413.25,442.64 422.42,442.64 C431.60,442.64 440.78,433.89 449.96,433.89 C459.14,433.89 468.32,434.26 477.50,434.26 C486.67,434.26 495.85,433.50 505.03,432.80 C514.21,432.10 523.39,429.03 532.56,429.03 C541.74,429.03 550.92,437.96 560.10,438.27 C569.28,438.58 578.46,438.48 587.63,438.75 C596.81,439.03 605.99,441.55 615.17,441.55 C624.35,441.55 633.53,441.55 642.70,441.55 C651.88,441.55 661.06,444.22 670.24,444.22 C679.42,444.22 688.60,441.46 697.77,439.36 C706.95,437.27 716.13,430.49 725.31,430.49 C734.49,430.49 743.67,434.99 752.85,434.99 C762.02,434.99 771.20,434.51 780.38,433.89 C789.56,433.27 798.74,427.70 807.91,427.70 C817.09,427.70 826.27,433.89 835.45,433.89 C844.63,433.89 853.81,430.57 862.99,429.76 C872.16,428.96 881.34,428.67 890.52,428.06 C899.70,427.46 908.88,426.12 918.05,426.12 C927.23,426.12 936.41,426.69 945.59,427.33 C954.77,427.98 963.95,429.71 973.12,432.07 C982.30,434.43 991.48,444.78 1000.66,446.04 C1009.84,447.31 1019.02,447.50 1028.19,448.23" fill="none" stroke="#8c95b8" stroke-width="1.1"/>
<line x1="9.4" y1="479.7" x2="1024" y2="479.7" stroke="#c9c9c9" stroke-width="0.8"/>
<line x1="9.40" y1="479.7" x2="9.40" y2="489" stroke="#bdbdbd" stroke-width="0.8"/>
<text x="9.40" y="494.80" font-size="5.3" text-anchor="middle" fill="#5a5a5a" textLength="20.74" lengthAdjust="spacingAndGlyphs">1 Oct 2018</text>
<line x1="64.47" y1="479.7" x2="64.47" y2="489" stroke="#bdbdbd" stroke-width="0.8"/>
<text x="64.47" y="494.80" font-size="5.3" text-anchor="middle" fill="#5a5a5a" textLength="20.74" lengthAdjust="spacingAndGlyphs">4 Oct 2018</text>
<line x1="119.54" y1="479.7" x2="119.54" y2="489" stroke="#bdbdbd" stroke-width="0.8"/>
<text x="119.54" y="494.80" font-size="5.3" text-anchor="middle" fill="#5a5a5a" textLength="23.10" lengthAdjust="spacingAndGlyphs">10 Oct 2018</text>
<line x1="174.61" y1="479.7" x2="174.61" y2="489" stroke="#bdbdbd" stroke-width="0.8"/>
<text x="174.61" y="494.80" font-size="5.3" text-anchor="middle" fill="#5a5a5a" textLength="23.10" lengthAdjust="spacingAndGlyphs">12 Oct 2018</text>
<line x1="229.68" y1="479.7" x2="229.68" y2="489" stroke="#bdbdbd" stroke-width="0.8"/>
<text x="229.68" y="494.80" font-size="5.3" text-anchor="middle" fill="#5a5a5a" textLength="23.10" lengthAdjust="spacingAndGlyphs">16 Oct 2018</text>
<line x1="284.75" y1="479.7" x2="284.75" y2="489" stroke="#bdbdbd" stroke-width="0.8"/>
<text x="284.75" y="494.80" font-size="5.3" text-anchor="middle" fill="#5a5a5a" textLength="23.10" lengthAdjust="spacingAndGlyphs">18 Oct 2018</text>
<line x1="339.82" y1="479.7" x2="339.82" y2="489" stroke="#bdbdbd" stroke-width="0.8"/>
<text x="339.82" y="494.80" font-size="5.3" text-anchor="middle" fill="#5a5a5a" textLength="23.10" lengthAdjust="spacingAndGlyphs">20 Oct 2018</text>
<line x1="394.89" y1="479.7" x2="394.89" y2="489" stroke="#bdbdbd" stroke-width="0.8"/>
<text x="394.89" y="494.80" font-size="5.3" text-anchor="middle" fill="#5a5a5a" textLength="23.10" lengthAdjust="spacingAndGlyphs">27 Oct 2018</text>
<line x1="449.96" y1="479.7" x2="449.96" y2="489" stroke="#bdbdbd" stroke-width="0.8"/>
<text x="449.96" y="494.80" font-size="5.3" text-anchor="middle" fill="#5a5a5a" textLength="23.10" lengthAdjust="spacingAndGlyphs">30 Oct 2018</text>
<line x1="505.03" y1="479.7" x2="505.03" y2="489" stroke="#bdbdbd" stroke-width="0.8"/>
<text x="505.03" y="494.80" font-size="5.3" text-anchor="middle" fill="#5a5a5a" textLength="21.68" lengthAdjust="spacingAndGlyphs">1 Nov 2018</text>
<line x1="560.10" y1="479.7" x2="560.10" y2="489" stroke="#bdbdbd" stroke-width="0.8"/>
<text x="560.10" y="494.80" font-size="5.3" text-anchor="middle" fill="#5a5a5a" textLength="21.68" lengthAdjust="spacingAndGlyphs">2 Nov 2018</text>
<line x1="615.17" y1="479.7" x2="615.17" y2="489" stroke="#bdbdbd" stroke-width="0.8"/>
<text x="615.17" y="494.80" font-size="5.3" text-anchor="middle" fill="#5a5a5a" textLength="21.68" lengthAdjust="spacingAndGlyphs">5 Nov 2018</text>
<line x1="670.24" y1="479.7" x2="670.24" y2="489" stroke="#bdbdbd" stroke-width="0.8"/>
<text x="670.24" y="494.80" font-size="5.3" text-anchor="middle" fill="#5a5a5a" textLength="21.68" lengthAdjust="spacingAndGlyphs">7 Nov 2018</text>
<line x1="725.31" y1="479.7" x2="725.31" y2="489" stroke="#bdbdbd" stroke-width="0.8"/>
<text x="725.31" y="494.80" font-size="5.3" text-anchor="middle" fill="#5a5a5a" textLength="24.04" lengthAdjust="spacingAndGlyphs">10 Nov 2018</text>
<line x1="780.38" y1="479.7" x2="780.38" y2="489" stroke="#bdbdbd" stroke-width="0.8"/>
<text x="780.38" y="494.80" font-size="5.3" text-anchor="middle" fill="#5a5a5a" textLength="24.04" lengthAdjust="spacingAndGlyphs">12 Nov 2018</text>
<line x1="835.45" y1="479.7" x2="835.45" y2="489" stroke="#bdbdbd" stroke-width="0.8"/>
<text x="835.45" y="494.80" font-size="5.3" text-anchor="middle" fill="#5a5a5a" textLength="24.04" lengthAdjust="spacingAndGlyphs">16 Nov 2018</text>
<line x1="890.52" y1="479.7" x2="890.52" y2="489" stroke="#bdbdbd" stroke-width="0.8"/>
<text x="890.52" y="494.80" font-size="5.3" text-anchor="middle" fill="#5a5a5a" textLength="24.04" lengthAdjust="spacingAndGlyphs">20 Nov 2018</text>
<line x1="945.59" y1="479.7" x2="945.59" y2="489" stroke="#bdbdbd" stroke-width="0.8"/>
<text x="945.59" y="494.80" font-size="5.3" text-anchor="middle" fill="#5a5a5a" textLength="24.04" lengthAdjust="spacingAndGlyphs">23 Nov 2018</text>
<line x1="1000.66" y1="479.7" x2="1000.66" y2="489" stroke="#bdbdbd" stroke-width="0.8"/>
<text x="1000.66" y="494.80" font-size="5.3" text-anchor="middle" fill="#5a5a5a" textLength="24.04" lengthAdjust="spacingAndGlyphs">29 Nov 2018</text>
<text x="1017.20" y="494.80" font-size="5.3" text-anchor="start" fill="#5a5a5a" textLength="24.04" lengthAdjust="spacingAndGlyphs">30 Nov 2018</text>
<text x="6" y="481.70" font-size="5.5" text-anchor="end" fill="#555">0</text>
<text x="6" y="469.55" font-size="5.5" text-anchor="end" fill="#555">1</text>
<text x="6" y="457.40" font-size="5.5" text-anchor="end" fill="#555">2</text>
<text x="6" y="445.25" font-size="5.5" text-anchor="end" fill="#555">3</text>
<text x="6" y="433.10" font-size="5.5" text-anchor="end" fill="#555">4</text>
<text x="6" y="420.95" font-size="5.5" text-anchor="end" fill="#555">5</text>
<text x="6" y="408.80" font-size="5.5" text-anchor="end" fill="#555">6</text>
<text x="6" y="396.65" font-size="5.5" text-anchor="end" fill="#555">7</text>
<text x="6" y="384.50" font-size="5.5" text-anchor="end" fill="#555">8</text>
<text x="6" y="372.35" font-size="5.5" text-anchor="end" fill="#555">9</text>
<text x="6" y="360.20" font-size="5.5" text-anchor="end" fill="#555">10</text>
</svg>
</body></html>
